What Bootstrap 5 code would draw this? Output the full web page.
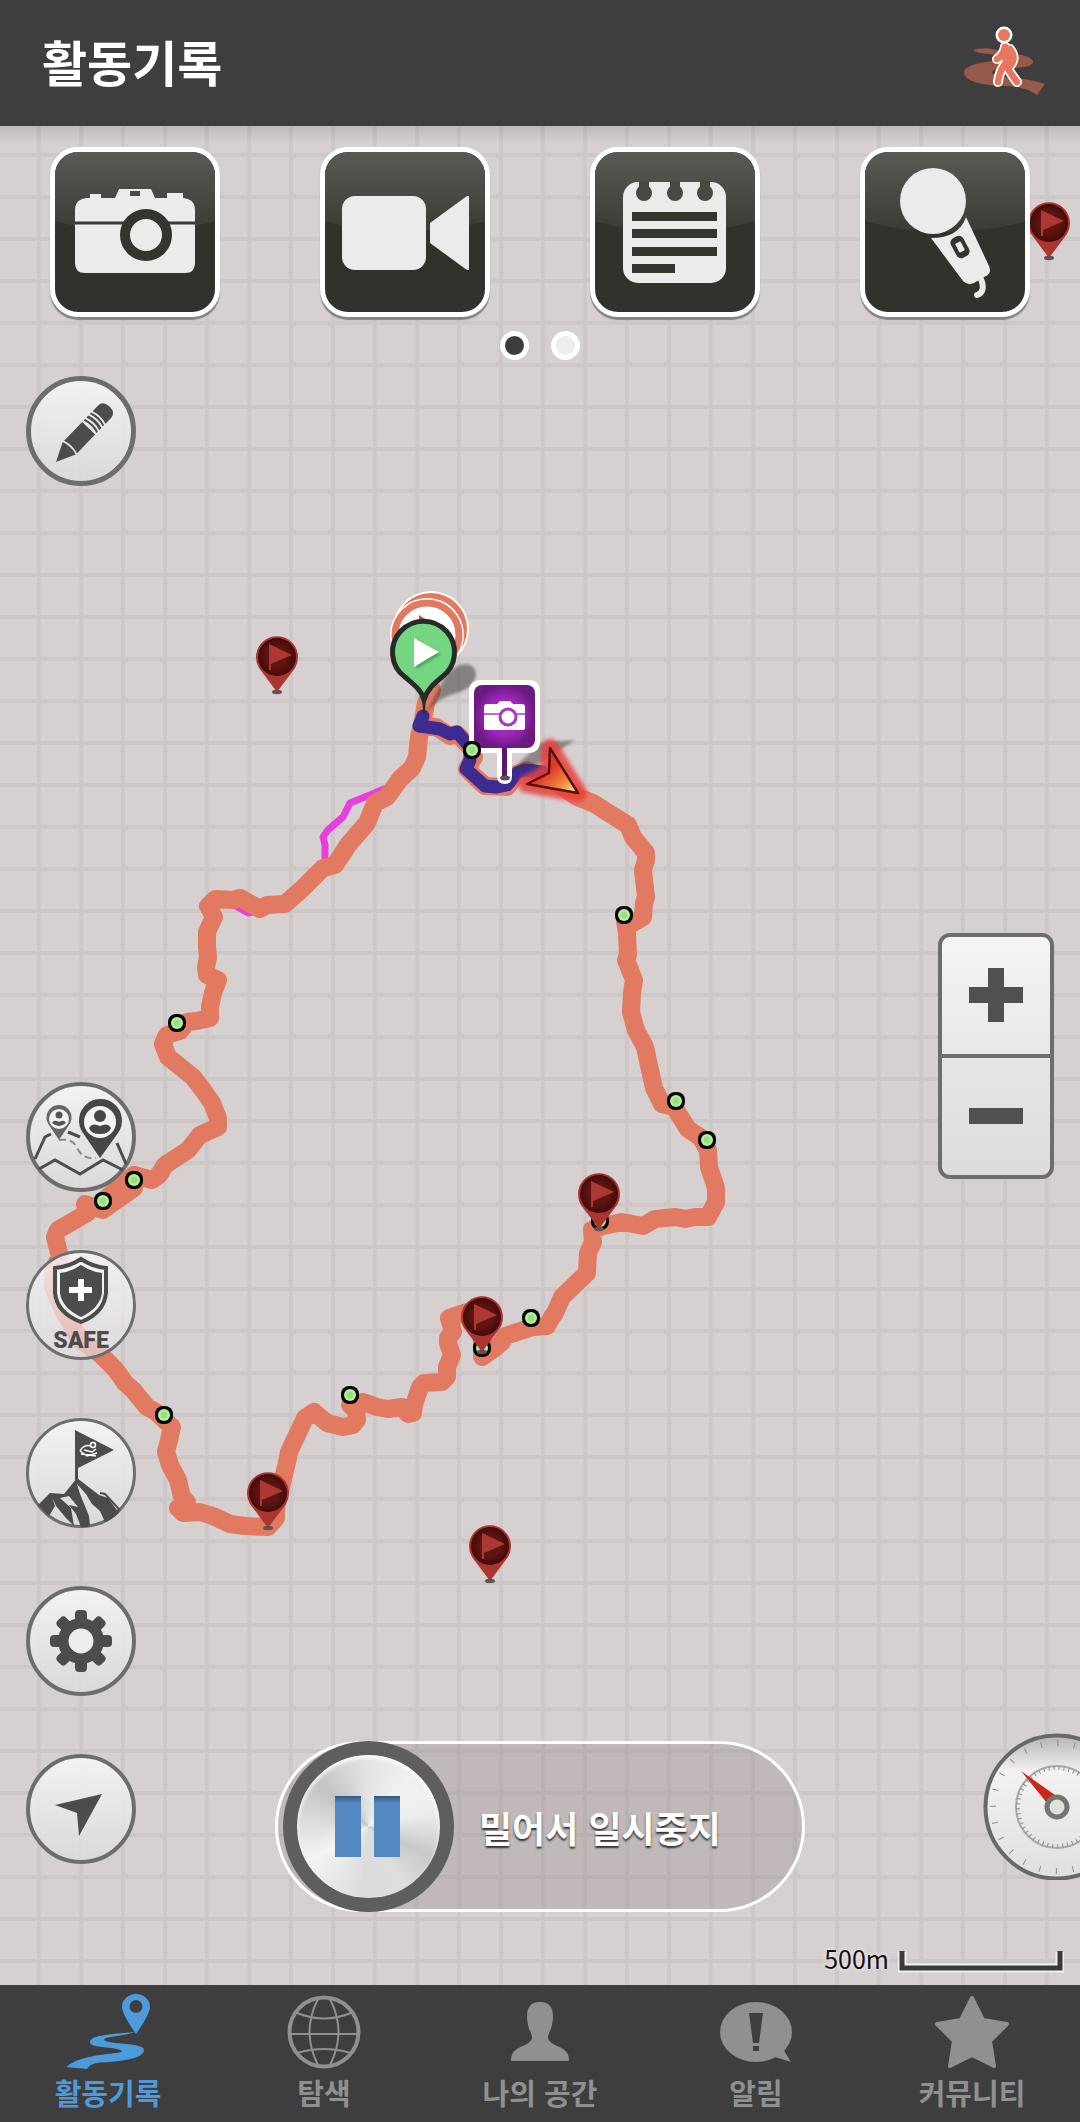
<!DOCTYPE html>
<html lang="ko">
<head>
<meta charset="utf-8">
<meta name="viewport" content="width=device-width, initial-scale=1">
<title>활동기록</title>
<link rel="stylesheet" href="https://cdn.jsdelivr.net/npm/bootstrap@5.3.0/dist/css/bootstrap.min.css">
<style>
  :root { --bar: #3e3e3e; --ink: #4c4c4c; --rim: #6d6d6d; --route: #e27a62; }
  body { font-family: "Noto Sans CJK KR", "Noto Sans", sans-serif; background: #d6d0d0; }
  .app-bar { background: var(--bar); height: 126px; padding: 0 30px 4px 42px; }
  .app-title { font-size: 49px; line-height: 64px; font-weight: 700; }
  .map-area {
    background-color: #d6d0d0;
    background-image:
      linear-gradient(rgba(60,50,50,.14), rgba(60,50,50,0)),
      linear-gradient(90deg, #cec7c7 4px, transparent 4px),
      linear-gradient(#cec7c7 4px, transparent 4px);
    background-size: 100% 18px, 42px 42px, 42px 42px;
    background-position: 0 0, 37px 0, 0 27px;
    background-repeat: no-repeat, repeat, repeat;
  }
  .map-canvas { pointer-events: none; }
  .tool-row { padding-top: 21px; }
  .tool-btn { width: 170px; height: 170px; padding: 0; border: 5px solid #fff; border-radius: 28px; overflow: hidden; background: #31322c; box-shadow: 0 3px 1px rgba(60,50,50,.5); }
  .tool-btn svg { display: block; }
  .pager { gap: 22px; padding-top: 14px; }
  .pager-dot { width: 29px; height: 29px; padding: 0; border: 5px solid #fff; border-radius: 50%; background: #eeedeb; }
  .pager-dot.active { background: #3c3c3c; }
  .overlay-grid { display: grid; grid-template-columns: minmax(0,1fr) minmax(0,530px) minmax(0,1fr); }
  .side-left { padding: 16px 0 121px 26px; }
  .side-group { gap: 58px; }
  .round-btn { width: 110px; height: 110px; padding: 0; border: 0; border-radius: 50%; background: linear-gradient(rgba(246,244,245,.94), rgba(222,219,220,.72)); }
  .round-btn.soft { background: linear-gradient(rgba(246,244,245,.86), rgba(228,225,226,.6)); }
  .round-btn svg { display: block; }
  .zoom-box { width: 116px; margin-right: 26px; }
  .zoom-box .btn { height: 125px; padding: 0; border: 4px solid var(--rim); background: linear-gradient(#f6f4f5, #e9e7e8); border-radius: 12px 12px 0 0; }
  .zoom-box .btn + .btn { background: linear-gradient(#e7e5e6, #dddbdc); border-radius: 0 0 12px 12px; margin-top: -4px; }
  .slide-wrap { margin-bottom: 73px; height: 171px; }
  .slide-input { -webkit-appearance: none; appearance: none; width: 100%; height: 171px; margin: 0; padding: 0 5px; border: 3px solid #fff; border-radius: 86px; background: rgba(120,105,105,.22); }
  .slide-input::-webkit-slider-runnable-track { height: 165px; }
  .slide-input::-webkit-slider-thumb {
    -webkit-appearance: none; width: 171px; height: 171px; margin-top: -3px; border: 14px solid #605d5d; border-radius: 50%;
    background:
      linear-gradient(#34597f, #5289c2 7px) 38px 41px / 26px 61px no-repeat,
      linear-gradient(#34597f, #5289c2 7px) 77px 41px / 26px 61px no-repeat,
      conic-gradient(#e4e4e4, #f1f1f1 40deg, #efefef 75deg, #c9c9c9 115deg, #dedede 150deg, #dcdcdc 185deg, #f4f4f4 240deg, #dcdcdc 275deg, #c4c4c4 310deg, #e4e4e4) padding-box;
    box-shadow: inset 0 3px 4px #fff;
  }
  .slide-label { left: 204px; font-size: 36px; line-height: 52px; font-weight: 700; color: #fff; text-shadow: 0 2px 2px rgba(20,20,20,.85); pointer-events: none; }
  .side-right { padding-bottom: 10px; }
  .gauge-btn { padding: 0; border: 0; background: none; margin: 0 -50px 61px 0; border-radius: 50%; }
  .gauge-btn svg { display: block; }
  .scale-row { padding-right: 16px; gap: 9px; font-size: 25px; line-height: 34px; color: #111; text-shadow: 0 0 4px #fff; }
  .tab-bar { background: var(--bar); }
  .tab-item { color: #909090; padding: 5px 0 8px; font-size: 29px; line-height: 44px; font-weight: 700; }
  .tab-item.active { color: #4d9bda; }
</style>
<script src="https://cdn.jsdelivr.net/npm/bootstrap@5.3.0/dist/js/bootstrap.bundle.min.js"></script>
</head>
<body>
<div class="d-flex flex-column min-vh-100">
  <header class="app-bar d-flex align-items-center justify-content-between">
    <h1 class="app-title text-white m-0">활동기록</h1>
    <svg width="90" height="80" viewBox="960 23 90 80" role="img" aria-label="걷기">
      <path fill="#96594c" d="M973 52Q982 49 992 51L1012 55Q1033 58 1033 64Q1032 70 1010 70Q994 70 992 74Q992 78 1012 80Q1030 81 1045 86L1037 97Q1027 89 1006 88Q964 87 964 74Q965 64 1008 62Q1006 58 990 56Q975 55 973 52Z"/>
      <g stroke-linecap="round" stroke-linejoin="round" fill="none">
        <g stroke="#fff" stroke-width="10"><path d="M1005 49L1006 68L1012 77L1017 84M1005 66Q999 74 998 84" /><path d="M1005 49Q1003 58 997 61M1010 51Q1017 60 1010 68"/><circle cx="1004" cy="37" r="3.5"/></g>
        <path stroke="#fff" stroke-width="12" d="M1006 51L1010 65"/>
        <g stroke="#e9765e" stroke-width="6.5"><path d="M1005 49L1006 68L1012 77L1017 84M1005 66Q999 74 998 84"/><path d="M1005 49Q1003 58 997 61M1010 51Q1017 60 1010 68"/></g>
        <path stroke="#e9765e" stroke-width="9" d="M1006 51L1009 65"/>
      </g>
      <circle cx="1004" cy="37" r="6" fill="#e9765e"/>
    </svg>
  </header>

  <main class="map-area position-relative flex-grow-1 d-flex flex-column overflow-hidden">
    <svg class="map-canvas position-absolute top-0 start-0 w-100 h-100" viewBox="0 126 1080 1859" preserveAspectRatio="xMidYMin slice" aria-hidden="true">
      <defs>
        <radialGradient id="pinDisc"><stop offset=".5" stop-color="#601512"/><stop offset="1" stop-color="#430b0a"/></radialGradient>
        <radialGradient id="violet"><stop offset="0" stop-color="#b42bd0"/><stop offset=".6" stop-color="#9d26b8"/><stop offset="1" stop-color="#6a1a80"/></radialGradient>
        <linearGradient id="fire" x1="0" y1="0" x2="1" y2="1"><stop offset=".45" stop-color="#e2352a"/><stop offset=".75" stop-color="#f08a3c"/><stop offset="1" stop-color="#fff3b0"/></linearGradient>
        <filter id="soft3" x="-50%" y="-50%" width="200%" height="200%"><feGaussianBlur stdDeviation="2"/></filter>
        <filter id="soft1"><feGaussianBlur stdDeviation="1.5"/></filter>
        <g id="flagPin">
          <ellipse rx="5" ry="2.2" fill="#5b5454"/>
          <path d="M0 0L-18-24A21 21 0 1 1 18-24Z" fill="#aa3531"/>
          <circle cy="-35" r="19" fill="url(#pinDisc)"/>
          <path d="M-8-48L15-37L-6-28V-22H-8Z" fill="#ac3833"/>
        </g>
        <g id="node"><rect x="-9" y="-9" width="18" height="18" rx="8" fill="#050805"/><circle r="6" fill="#b3f09b"/><circle r="3.4" fill="#97df80"/></g>
      </defs>
      <g fill="none" stroke-linejoin="round" stroke-linecap="round">
        <path stroke="#e83fdc" stroke-width="7" d="M384 789L365 797L350 803L343 817L328 830L323 837L325 845V862M236 906L248 913L258 911"/>
        <path stroke="#e27a62" stroke-width="18" d="M432 690L426 703L423 720L419 737L417 757L412 768L400 779L387 797L375 803L367 823L348 845L335 865L323 868L303 888L285 904L267 905L260 909L240 898L233 900L215 899L208 906L214 917L207 932V947L208 957L206 967L207 975L218 980L213 993L210 1007V1018L197 1021L187 1022L180 1031L167 1035L163 1044L168 1057L178 1065L193 1077L203 1090L212 1103L218 1118V1127L200 1135L188 1150L165 1165L159 1175L152 1180L134 1175V1188L103 1210L85 1204L87 1213L70 1223L58 1230L55 1237L60 1257L53 1270V1287L63 1310L80 1340L100 1354L116 1370L125 1383L133 1390L147 1407L156 1412L172 1427L169 1440L166 1452L170 1465L178 1480L182 1497L187 1502L178 1508L183 1513L200 1512L213 1516L230 1524L245 1526L268 1527L276 1518V1507L282 1483L288 1458L289 1452L305 1418L314 1412L327 1423L343 1427L353 1425L357 1420L356 1410L350 1405L363 1402L377 1407L388 1409L402 1407L408 1414L413 1413L414 1405L420 1387L424 1383L442 1382L447 1377V1367L452 1355L448 1343V1338L453 1332L449 1318L467 1312L482 1337V1357L495 1348L502 1342L505 1336L533 1327L547 1326L552 1317L555 1313L562 1297L587 1273L588 1253L593 1242L592 1230L603 1226L622 1222L643 1226L655 1219L676 1217L685 1219L695 1217L708 1217L716 1202V1188L709 1167L708 1150L700 1137L688 1129L681 1118L674 1107L662 1104L654 1088L650 1070L645 1047L636 1030L631 1012L632 993L634 980L626 960L628 955L627 933L625 921L633 923L643 917L644 903L646 897L643 870L646 860V853L633 837L628 825L607 812L593 803L577 797L557 783L527 770L517 774L507 787L485 786L475 777L467 769L474 757L470 747L457 734L450 736L436 727L424 727"/>
        <path stroke="#e27a62" stroke-width="18" d="M482 1326L472 1312M103 1208L134 1184M103 1201L134 1175"/>
        <path stroke="#3c2c92" stroke-width="13" d="M423 716L419 726L427 727L440 729L450 734L457 732L470 747V760L466 769L475 777L485 786L497 787L507 785L517 773L525 770L543 772"/>
      </g>
      <g>
        <use href="#node" x="624" y="915"/><use href="#node" x="676" y="1101"/><use href="#node" x="707" y="1140"/>
        <use href="#node" x="600" y="1221"/><use href="#node" x="531" y="1318"/><use href="#node" x="482" y="1348"/><use href="#node" x="350" y="1395"/>
        <use href="#node" x="164" y="1415"/><use href="#node" x="103" y="1201"/><use href="#node" x="134" y="1180"/><use href="#node" x="177" y="1023"/>
      </g>
      <use href="#flagPin" x="277" y="692"/><use href="#flagPin" x="1049" y="258"/><use href="#flagPin" x="599" y="1229"/>
      <use href="#flagPin" x="482" y="1352"/><use href="#flagPin" x="268" y="1528"/><use href="#flagPin" x="490" y="1581"/>
      <!-- finish rings behind the start pin -->
      <g fill="#fff">
        <circle cx="431" cy="629" r="38"/><circle cx="431" cy="629" r="33" stroke="#e27a62" stroke-width="6"/>
        <circle cx="427" cy="635" r="37"/><circle cx="427" cy="635" r="32" stroke="#e27a62" stroke-width="7"/>
        <path d="M419 615L428 621H419Z" fill="#c8503c"/>
      </g>
      <path d="M424 716C440 690 445 665 466 664C480 665 479 684 464 690C450 697 440 694 424 716Z" fill="#3a3030" opacity=".5" filter="url(#soft1)"/>
      <path d="M424 700C421 689 412 683 405 677A31 31 0 1 1 442 677C435 683 427 689 424 700Z" fill="#75d681" stroke="#262c27" stroke-width="5" stroke-linejoin="round"/>
      <path d="M420 690Q424 698 424 714Q424 698 428 690L424 697Z" fill="#262c27" stroke="#262c27" stroke-width="2"/>
      <path d="M416 640L441 654L416 669Z" fill="#2f7c3a" opacity=".6" filter="url(#soft1)"/>
      <path d="M414 638L439 652L414 667Z" fill="#fff"/>
      <!-- photo marker and heading arrow -->
      <path d="M512 770L540 743L575 740L560 750L536 765Z" fill="#3a3030" opacity=".45" filter="url(#soft1)"/>
      <path d="M550 748L578 793L527 784L549 773Z" fill="#e8403a" stroke="#e8403a" stroke-width="18" stroke-linejoin="round" opacity=".85" filter="url(#soft3)"/>
      <path d="M550 748L578 793L527 784L549 773Z" fill="url(#fire)" stroke="#5c1008" stroke-width="2.5" stroke-linejoin="round"/>
      <path d="M481 680H528Q540 680 540 692V741Q540 753 528 753H512V776Q512 784 505 784Q497 784 497 776V753H481Q469 753 469 741V692Q469 680 481 680Z" fill="#fff"/>
      <path d="M502 745H507V778H502Z" fill="#5b1670"/><ellipse cx="505" cy="778" rx="5" ry="2.5" fill="#555"/>
      <rect x="474" y="685" width="61" height="63" rx="8" fill="url(#violet)"/>
      <path d="M487 704H497L500 701H510L513 704H522Q525 704 525 707V728Q525 730 522 730H487Q484 730 484 728V707Q484 704 487 704Z" fill="#fff"/>
      <path d="M484 714H525" stroke="#a838be" stroke-width="1.5"/><circle cx="508" cy="717" r="8" fill="#fff" stroke="#a838be" stroke-width="3"/>
      <use href="#node" x="472" y="750"/>
    </svg>

    <svg width="0" height="0" class="position-absolute" aria-hidden="true"><defs>
      <linearGradient id="sheen" x1="0" y1="0" x2="0" y2="1"><stop offset="0" stop-color="#5a5c55"/><stop offset="1" stop-color="#3a3b34"/></linearGradient>
      <path id="gloss" d="M0 0H170V73Q85 97 0 73Z" fill="url(#sheen)"/>
    </defs></svg>

    <div class="tool-row row g-0 position-relative">
      <div class="col-3 d-flex justify-content-center"><button class="tool-btn" type="button" aria-label="사진">
        <svg width="160" height="160" viewBox="5 5 160 160"><use href="#gloss"/>
          <path fill="#ecebea" fill-rule="evenodd" d="M37 51H40V47H51V51H65L69 42H101L105 51H117V46H133V51Q145 52 145 63V116Q145 126 135 126H35Q25 126 25 116V63Q25 52 37 51ZM80 44V49H90V44Z"/>
          <path d="M25 76H145" stroke="#3a3b35" stroke-width="3"/><circle cx="96" cy="88" r="21" fill="#ecebea" stroke="#34352e" stroke-width="10"/></svg></button></div>
      <div class="col-3 d-flex justify-content-center"><button class="tool-btn" type="button" aria-label="동영상">
        <svg width="160" height="160" viewBox="5 5 160 160"><use href="#gloss"/>
          <rect x="22" y="49" width="84" height="74" rx="13" fill="#ecebea"/><path fill="#ecebea" d="M110 76L147 49H149V123H147L110 96Z"/></svg></button></div>
      <div class="col-3 d-flex justify-content-center"><button class="tool-btn" type="button" aria-label="메모">
        <svg width="160" height="160" viewBox="5 5 160 160"><use href="#gloss"/>
          <rect x="33" y="35" width="103" height="101" rx="15" fill="#ecebea"/>
          <g fill="#484a42"><circle cx="54" cy="46" r="8"/><circle cx="85" cy="46" r="8"/><circle cx="115" cy="46" r="8"/><path d="M49 34H59V44H49ZM80 34H90V44H80ZM110 34H120V44H110Z"/></g>
          <path fill="#34352e" d="M42 65H127V74H42ZM42 82H127V91H42ZM42 100H127V109H42ZM42 117H85V126H42Z"/></svg></button></div>
      <div class="col-3 d-flex justify-content-center"><button class="tool-btn" type="button" aria-label="음성">
        <svg width="160" height="160" viewBox="5 5 160 160"><use href="#gloss"/>
          <circle cx="73" cy="54" r="33" fill="#ecebea"/><path fill="#ecebea" d="M71 91Q99 91 106 70L129 119Q132 126 126 129L114 136Q108 139 103 134Z"/>
          <path d="M121 132Q126 145 117 148" fill="none" stroke="#ecebea" stroke-width="6" stroke-linecap="round"/>
          <rect x="93" y="89" width="14" height="22" rx="5" fill="#34352e" transform="rotate(-28 100 100)"/><rect x="97" y="95" width="6" height="10" rx="1" fill="#ecebea" transform="rotate(-28 100 100)"/></svg></button></div>
    </div>
    <div class="pager d-flex justify-content-center position-relative">
      <button class="pager-dot active" type="button" aria-label="1"></button>
      <button class="pager-dot" type="button" aria-label="2"></button>
    </div>

    <div class="overlay-grid flex-grow-1 position-relative">
      <div class="side-left d-flex flex-column justify-content-between">
        <button class="round-btn" type="button" aria-label="그리기">
          <svg width="110" height="110" viewBox="0 0 110 110" fill="#4c4c4c"><circle cx="55" cy="55" r="52.5" fill="none" stroke="#6d6d6d" stroke-width="5"/>
            <g transform="translate(30 86) rotate(-46)"><path d="M0 0L19-9Q22 0 19 9Z"/><path d="M21-9H47V9H21Q24 0 21-9Z"/><path d="M49-9H51Q54 0 51 9H49Q52 0 49-9ZM53-9H56Q59 0 56 9H53Q56 0 53-9ZM58-9H60Q63 0 60 9H58Q61 0 58-9ZM62-9H70Q77-9 77 0Q77 9 70 9H62Q65 0 62-9Z"/></g></svg>
        </button>
        <div class="side-group d-flex flex-column">
          <button class="round-btn" type="button" aria-label="지도">
            <svg width="110" height="110" viewBox="0 0 110 110"><circle cx="55" cy="55" r="53" fill="none" stroke="#6d6d6d" stroke-width="4"/>
              <path d="M9 77L19 55L25 52M42 50L54 55M91 61L100 82M13 87L29 78L54 92L77 78L97 88" fill="none" stroke="#4c4c4c" stroke-width="3"/>
              <path d="M33 58Q47 56 51 66Q57 78 70 76" fill="none" stroke="#8a8a8a" stroke-width="2" stroke-dasharray="7 4"/>
              <path d="M33 58L23 43A12.5 12.5 0 1 1 43 43Z" fill="#666"/><circle cx="33" cy="37" r="10" fill="#f2f0f1"/><circle cx="33" cy="33" r="3.5" fill="#555"/><path d="M26 41Q28 37 33 40Q38 37 40 41Q33 47 26 41Z" fill="#555"/>
              <path d="M74 76L57 51A21.5 21.5 0 1 1 92 51Z" fill="#464646"/><circle cx="74" cy="40" r="16" fill="#f4f2f3"/><circle cx="74" cy="34" r="6" fill="#464646"/><path d="M63 46Q66 40 74 44Q82 40 85 46Q83 52 74 52Q65 52 63 46Z" fill="#464646"/></svg>
          </button>
          <button class="round-btn soft" type="button" aria-label="SAFE">
            <svg width="110" height="110" viewBox="0 0 110 110"><circle cx="55" cy="55" r="53.5" fill="none" stroke="#6d6d6d" stroke-width="3"/>
              <path d="M55 9Q67 17 80 18V43Q78 63 55 72Q31 63 29 43V18Q43 17 55 9Z" fill="#f2f0f1" stroke="#4c4c4c" stroke-width="4"/>
              <path d="M55 15Q65 22 76 23V43Q74 58 55 67Q36 58 34 43V23Q45 22 55 15Z" fill="#4c4c4c"/><path d="M43 40H66M55 29V51" stroke="#fff" stroke-width="6"/>
              <text x="55" y="98" text-anchor="middle" font-family="Roboto, 'Liberation Sans', sans-serif" font-weight="900" font-size="23" fill="#4c4c4c">SAFE</text></svg>
          </button>
          <button class="round-btn" type="button" aria-label="정상 기록">
            <svg width="110" height="110" viewBox="0 0 110 110"><circle cx="55" cy="55" r="53.5" fill="none" stroke="#6d6d6d" stroke-width="3"/>
              <path d="M49 12L88 32L52 50V62H49Z" fill="#4c4c4c"/>
              <path d="M54 33Q58 26 65 28M54 33L61 38L71 35M58 32L66 34L70 31M55 36L70 38" fill="none" stroke="#fff" stroke-width="1.5"/><circle cx="67" cy="27" r="2.5" fill="none" stroke="#fff" stroke-width="1.5"/>
              <path d="M12 87L24 75L38 76L51 60L73 77L82 80L93 95Q84 103 79 104L74 93L66 86L60 76L51 66L54 76L63 98L64 108Q58 110 55 109L50 96L43 87L52 89L43 78L34 80L45 90L48 108L40 100L30 88L26 79L29 88L23 98Z" fill="#4c4c4c"/>
              <path d="M74 75L79 76L93 91L91 94L76 80" fill="none" stroke="#4c4c4c" stroke-width="2"/></svg>
          </button>
          <button class="round-btn" type="button" aria-label="설정">
            <svg width="110" height="110" viewBox="0 0 110 110"><circle cx="55" cy="55" r="53" fill="none" stroke="#6d6d6d" stroke-width="4"/>
              <g fill="#4c4c4c"><g id="teeth"><rect x="49" y="24" width="12" height="62" rx="4"/><rect x="24" y="49" width="62" height="12" rx="4"/></g><use href="#teeth" transform="rotate(45 55 55)"/><circle cx="55" cy="55" r="23"/></g><circle cx="55" cy="55" r="12.5" fill="#eeecec"/></svg>
          </button>
          <button class="round-btn" type="button" aria-label="내 위치">
            <svg width="110" height="110" viewBox="0 0 110 110"><circle cx="55" cy="55" r="53" fill="none" stroke="#6d6d6d" stroke-width="4"/><path d="M76 40L53 82L51 59L29 51Z" fill="#4c4c4c"/></svg>
          </button>
        </div>
      </div>

      <div class="slide-wrap align-self-end position-relative d-flex align-items-center">
        <input class="slide-input" id="pauseSlide" type="range" min="0" max="100" value="0">
        <label class="slide-label position-absolute text-nowrap" for="pauseSlide">밀어서 일시중지</label>
      </div>

      <div class="side-right d-flex flex-column justify-content-end align-items-end">
        <button class="gauge-btn" type="button" aria-label="계기판">
          <svg width="147" height="147" viewBox="0 0 147 147"><defs><linearGradient id="dial" x1="0" y1="0" x2="0" y2="1"><stop offset="0" stop-color="#b5b3b3"/><stop offset=".25" stop-color="#f3f1f2"/><stop offset="1" stop-color="#e0dedf"/></linearGradient></defs>
            <circle cx="74" cy="74" r="71.5" fill="url(#dial)" stroke="#686868" stroke-width="4"/>
            <circle cx="74" cy="74" r="64" fill="none" stroke="#8d8d8d" stroke-width="6" stroke-dasharray="1 15.75"/>
            <circle cx="74" cy="74" r="41" fill="none" stroke="#a9a9a9" stroke-width="2"/><circle cx="74" cy="74" r="39" fill="none" stroke="#8d8d8d" stroke-width="4" stroke-dasharray="1 4"/>
            <path d="M38 38L72 62L64 70Z" fill="#c9281c"/><circle cx="74" cy="74" r="10" fill="#e0e1da" stroke="#747474" stroke-width="5"/></svg>
        </button>
        <div class="scale-row d-flex align-items-center">
          <span>500m</span>
          <svg width="166" height="30" viewBox="0 -4 166 30" fill="none" aria-hidden="true"><path d="M4 5V21H162V5" stroke="#f1efef" stroke-width="9"/><path d="M4 4V21H162V4" stroke="#3a3a3a" stroke-width="5"/></svg>
        </div>
      </div>
    </div>

    <div class="zoom-box position-absolute top-50 end-0 translate-middle-y d-flex flex-column">
      <button class="btn" type="button" aria-label="확대"><svg width="54" height="54" viewBox="0 0 54 54"><path d="M19 0H35V19H54V35H35V54H19V35H0V19H19Z" fill="#505050"/></svg></button>
      <button class="btn" type="button" aria-label="축소"><svg width="54" height="54" viewBox="0 0 54 54"><path d="M0 19H54V35H0Z" fill="#505050"/></svg></button>
    </div>
  </main>

  <nav class="tab-bar row g-0 text-center">
    <a class="tab-item active col d-flex flex-column align-items-center text-decoration-none" href="#" aria-current="page">
      <svg width="100" height="80" viewBox="58 1990 100 80" fill="currentColor"><path fill-rule="evenodd" d="M136 2034Q122 2014 122 2007A14 13 0 0 1 150 2007Q150 2014 136 2034ZM136 2000A6.5 6.5 0 1 0 136 2013A6.5 6.5 0 1 0 136 2000Z"/><path d="M135 2032C112 2034 90 2035 90 2042C90 2049 116 2046 122 2051C122 2055 84 2052 66 2067L87 2069C92 2062 97 2063 110 2062C130 2060 144 2057 144 2050C144 2042 108 2045 104 2040C104 2036 122 2037 135 2032Z"/></svg>활동기록</a>
    <a class="tab-item col d-flex flex-column align-items-center text-decoration-none" href="#">
      <svg width="100" height="80" viewBox="274 1990 100 80" fill="none" stroke="currentColor" stroke-width="2"><circle cx="324" cy="2032" r="34.5" stroke-width="4"/><path d="M288 2034H360M297 2013Q324 2024 351 2013M297 2053Q324 2045 351 2053M318 1999Q301 2032 318 2065M330 1999Q347 2032 330 2065"/></svg>탐색</a>
    <a class="tab-item col d-flex flex-column align-items-center text-decoration-none" href="#">
      <svg width="100" height="80" viewBox="490 1990 100 80" fill="currentColor"><path d="M540 2002C550 2002 553 2008 553 2017C552 2032 548 2032 548 2038C549 2044 559 2046 563 2049Q569 2052 569 2061H511Q511 2052 517 2049C521 2046 531 2044 532 2038C532 2032 528 2032 527 2017C527 2008 530 2002 540 2002Z"/></svg>나의 공간</a>
    <a class="tab-item col d-flex flex-column align-items-center text-decoration-none" href="#">
      <svg width="100" height="80" viewBox="706 1990 100 80" fill="currentColor"><ellipse cx="756" cy="2032" rx="36" ry="30"/><path d="M775 2057L791 2062L783 2049Z"/><path fill="#3e3e3e" d="M749 2013H763L759 2043H753ZM753 2046H759V2051H753Z"/></svg>알림</a>
    <a class="tab-item col d-flex flex-column align-items-center text-decoration-none" href="#">
      <svg width="100" height="80" viewBox="922 1990 100 80" fill="currentColor"><path stroke="currentColor" stroke-width="4" stroke-linejoin="round" d="M972 1998L983 2020L1007 2024L990 2041L994 2066L972 2055L950 2066L954 2041L937 2024L961 2020Z"/></svg>커뮤니티</a>
  </nav>
</div>
</body>
</html>
